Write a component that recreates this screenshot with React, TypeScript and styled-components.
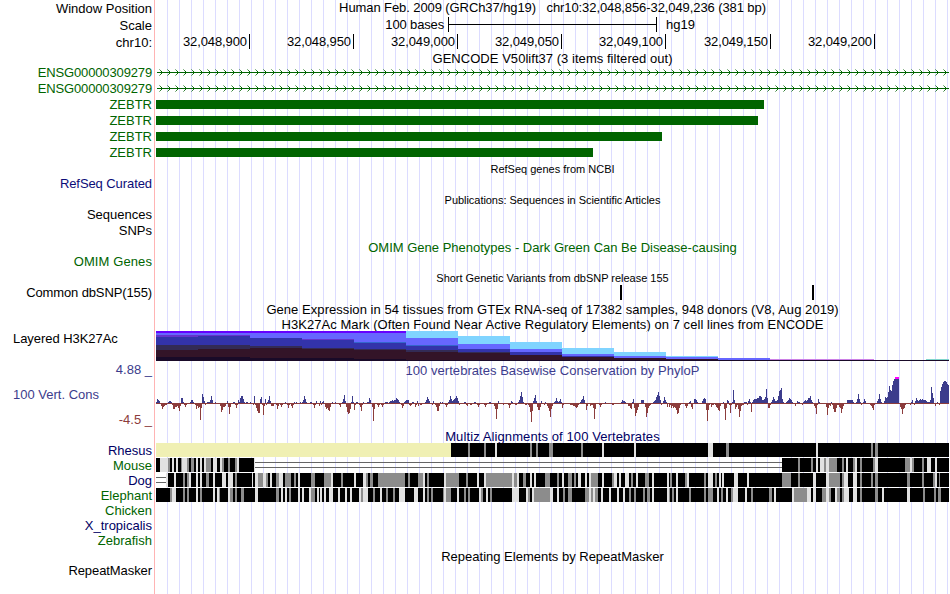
import * as React from "react";
import styled, { createGlobalStyle } from "styled-components";

const GlobalStyle = createGlobalStyle`
  body {
    margin: 0;
    background-color: #ffffff;
  }
`;

const BLACK = "#000000";
const GREEN = "#006400";
const NAVY = "#000064";
const CURATED = "#0c0c78";
const BLUE = "#3c3c8c";
const RED = "#8c3c3c";

const Browser = styled.div`
  display: flex;
  flex-direction: column;
  width: 949px;
  height: 594px;
  overflow: hidden;
  font-family: "Liberation Sans", Arial, sans-serif;
  font-size: 13px;
  line-height: 15px;
  white-space: pre;
`;

const Row = styled.div<{ $height: number }>`
  display: flex;
  flex: none;
  height: ${p => p.$height}px;
`;

const Label = styled.div<{ $color?: string; $top?: number; $left?: boolean; $spacing?: number }>`
  box-sizing: border-box;
  flex: none;
  width: 155px;
  padding: ${p => p.$top || 0}px 2px 0 13px;
  border-right: 1px solid #ffb4b4;
  color: ${p => p.$color || BLACK};
  letter-spacing: ${p => p.$spacing || 0}px;
  text-align: ${p => (p.$left ? "left" : "right")};
`;

const Plot = styled.div<{ $top?: number }>`
  box-sizing: border-box;
  flex: none;
  width: 793px;
  margin-left: 1px;
  padding-top: ${p => p.$top || 0}px;
  background-image: repeating-linear-gradient(
    to right,
    transparent 0,
    transparent 11px,
    #dcdcff 11px,
    #dcdcff 12px
  );
`;

const Caption = styled.div<{ $color?: string; $small?: boolean; $spacing?: number }>`
  color: ${p => p.$color || BLACK};
  font-size: ${p => (p.$small ? 11 : 13)}px;
  letter-spacing: ${p => p.$spacing || 0}px;
  text-align: center;
`;

const Scale = styled.div`
  display: flex;
`;

const ScaleName = styled.div`
  box-sizing: border-box;
  width: 292px;
  padding-right: 4px;
  letter-spacing: -0.15px;
  text-align: right;
`;

const ScaleBar = styled.div`
  display: flex;
  align-items: center;
  box-sizing: border-box;
  width: 209px;
  height: 15px;
  margin-right: 9px;
  border: solid #000000;
  border-width: 0 1px;
`;

const ScaleLine = styled.div`
  width: 100%;
  height: 1px;
  background-color: #000000;
`;

const Ruler = styled.div`
  display: flex;
`;

const RulerMark = styled.div<{ $width: number }>`
  box-sizing: border-box;
  flex: none;
  width: ${p => p.$width}px;
  padding-right: 2px;
  border-right: 1px solid #000000;
  letter-spacing: -0.1px;
  text-align: right;
`;

const Exon = styled.div<{ $width: number }>`
  width: ${p => p.$width}px;
  height: 9px;
  background-color: ${GREEN};
`;

const Variants = styled.div`
  display: flex;
`;

const Variant = styled.div<{ $gap: number }>`
  width: 2px;
  height: 15px;
  margin-left: ${p => p.$gap}px;
  background-color: #000000;
`;

const Limits = styled.div`
  display: flex;
  flex-direction: column;
`;

const Limit = styled.div<{ $color: string; $align: string; $gap?: number }>`
  margin-top: ${p => p.$gap || 0}px;
  color: ${p => p.$color};
  text-align: ${p => p.$align};
`;

const Drawing = styled.svg`
  display: block;
  shape-rendering: crispEdges;
`;

const marks = [
  { text: "32,048,900", width: 94 },
  { text: "32,048,950", width: 104 },
  { text: "32,049,000", width: 104 },
  { text: "32,049,050", width: 104 },
  { text: "32,049,100", width: 104 },
  { text: "32,049,150", width: 105 },
  { text: "32,049,200", width: 104 }
];

const exons = [608, 602, 506, 437];

const LIGHT = "#80d4ff";
const VIOLET = "#6600ff";
const PERI = "#6666ff";
const PURPLE = "#6633cc";
const INDIGO = "#3333aa";
const DUSK = "#332b55";
const MAROON = "#331428";
const NIGHT = "#190a28";
const AZURE = "#3366cc";

type Layer = [number, string];

// every layer is [top, color] and runs down to the base
const steps: { x: number; layers: Layer[] }[] = [
  { x: 0, layers: [[0, VIOLET], [2, PERI], [4, PURPLE], [6, INDIGO], [14, DUSK], [19, MAROON], [26, NIGHT]] },
  { x: 42, layers: [[0, VIOLET], [2, PERI], [4, PURPLE], [5, INDIGO], [14, DUSK], [18, MAROON], [26, NIGHT]] },
  { x: 94, layers: [[0, VIOLET], [2, PERI], [7, INDIGO], [15, DUSK], [17, MAROON], [27, NIGHT]] },
  { x: 146, layers: [[0, VIOLET], [2, PERI], [8, PURPLE], [9, INDIGO], [17, DUSK], [18, MAROON], [27, NIGHT]] },
  { x: 198, layers: [[0, VIOLET], [2, PERI], [11, AZURE], [12, INDIGO], [18, DUSK], [19, MAROON], [28, NIGHT]] },
  { x: 250, layers: [[0, LIGHT], [7, PERI], [14, AZURE], [15, INDIGO], [19, DUSK], [21, MAROON], [29, NIGHT]] },
  { x: 302, layers: [[5, LIGHT], [13, PERI], [18, INDIGO], [21, DUSK], [22, MAROON], [29, NIGHT]] },
  { x: 354, layers: [[11, LIGHT], [18, PERI], [21, INDIGO], [24, MAROON], [29, NIGHT]] },
  { x: 406, layers: [[17, LIGHT], [23, PERI], [25, INDIGO], [26, MAROON], [29, NIGHT]] },
  { x: 458, layers: [[21, LIGHT], [25, PERI], [27, MAROON], [29, NIGHT]] },
  { x: 510, layers: [[25, LIGHT], [26, PERI], [28, MAROON], [29, NIGHT]] },
  { x: 562, layers: [[27, PERI], [29, NIGHT]] },
  { x: 614, layers: [[28, "#cc80e6"], [29, NIGHT]] },
  { x: 718, layers: [[29, NIGHT]] },
  { x: 770, layers: [[28, "#80d4cc"], [29, NIGHT]] }
];

// first column of a run, then one height per column
const scores: number[][] = [
  [156, 1, 4, 3, 2, 0, -3, -6, -4, -3, -2, -2, -1, 1, 2, 2, 1, -2, -6, -6, -4, -4, -3, -5, -8, -3, 5, 5, 1, -2, -4, -2, -1, -1, -1, 1, 3, 3, 1, -1, -2, -6, -3],
  [198, -5, -4, -17, -5, 9, 6, 2, -2, -1, 1, 1, 1, 3, 7, 3, -1, -1, 1, -1, -1, -1, -1, -3, -9, -7, -4, -4, -3, -1, 2, -4, -11, -4, -1, -1, 1, 1, -2, -5, -2, 3, 1],
  [240, 5, 7, 7, 4, 1, -1, 1, 1, -1, -1, 1, -1, -1, -2, 7, -2, -5, -8, -10, -10, 4, 6, -2, -12, -3, 4, -2, 1, 3, 7, 2, -3, -3, -3, 0, -1, -2, -6, -3, -1, -2, -4, -2],
  [283, -1, -1, 1, -1, -2, -5, -2, -1, -3, -5, -2, 1, -1, 1, -1, -1, 0, 1, 0, 1, 3, 7, 4, 1, -1, -1, 0, 1, 1, -1, -2, -5, -2, 2, -1, -1, -3, 2, -2, 1, 2, -1],
  [325, -4, -6, -5, -7, -8, -4, -1, 1, -1, -1, 1, -1, -1, -1, -2, -4, -1, 1, 4, 8, 2, -4, -9, -11, -10, -6, 1, 7, 1, -7, -2, 1, 1, -1, -2, -4, -8, -2, 1, -1, -1, -1, 1, 1, 5],
  [370, 3, -1, -4, -18, -6, -1, -1, -2, -4, -2, -1, -2, -4, -2, -1, 1, 1, 1, -1, 1, 2, 2, 3, 2, 3, 3, 5, 4, 3, 1, -1, -2, -5, -3, 1, 2, 3, 3, 3, -2],
  [410, -3, -2, 1, 1, -1, -4, -2, 2, -3, -1, -2, -2, -1, -1, -1, 1, 3, 6, 4, 2, -1, -1, -2, 2, -1, -2, -4, -8, -8, -3, 1, -1, 1, -1, -1, -2, -4, -2, 1, 3, 7, 4, 2],
  [453, 3, 4, 5, 7, 5, 2, -2, -1, -1, -1, -1, 1, 1, -2, -3, -1, -1, -2, -2, -1, -1, 1, 1, -1, -2, -4, -2, 0, -1, -1, -1, -2, -4, -2, -1, -1, 1, 1, -1, -1, -1, -3, -6, -16, -6, 2, -1],
  [500, 0, -1, -1, -2, -1, -1, 0, -1, -2, -5, -2, 2, 1, 0, -1, -2, -2, -1, 1, 3, 7, 11, 6, 1, -1, -2, -2, -1, -2, -4, -9, -19, -8, 2, 5, 8, 2, -4, -7, -7, -4, 2, -1],
  [543, -1, -2, 1, -1, -3, -5, -8, -14, -6, -3, -1, 1, 2, 5, 2, 1, 2, 4, 1, -5, -2, -1, -1, -1, -1, -1, -1, -2, -2, -2, -3, -3, -4, -5, -4, -2, -1, 1, 3, 4, 7, 3, -1],
  [586, -7, -3, -1, -1, -3, -2, -2, -5, -16, -6, -1, 0, -1, -2, -4, -2, -1, 0, 0, 1, 0, -1, -1, 0, -1, -1, -2, -2, -1, 0, -1, -1, -1, -1, 0, 1, 3, 2, 2, 1, -1],
  [627, -1, -3, -3, -5, -6, 1, 4, -5, -13, -10, -7, -4, -1, -1, 3, 3, 3, -1, -4, -14, -10, -5, -3, -2, -1, -1, 1, 2, 3, 6, 8, 11, 7, 3, -2, -1, 2, 6, 3, 1, -4, -1],
  [669, -4, -2, -5, -3, -5, -4, -5, -7, -11, -10, -5, -2, -1, -1, 0, -1, -3, -5, -3, -1, 1, 2, -4, -6, -1, 4, 4, 3, 1, -1, -1, -1, -1, 2, 4, 5, 4, -7, -18, -7],
  [709, -2, -1, -4, -2, -2, -1, -2, -4, -5, -7, -8, -3, -1, -1, 1, -6, -17, -5, 3, 2, -2, -10, -2, 1, 13, 3, -6, -4, -2, -6, -14, -8, -3, -2, -2, 1, 1, 1, -2, 2, 4, 1, -9, 1],
  [753, 3, 4, 4, 4, 5, 5, 7, 7, 6, 3, 3, 4, 6, 14, 5, -5, -5, -2, 1, 3, 6, 4, 2, 2, 3, 7, 12, 13, 15, 4, 1, -1, -1, 1, 2, 3, 5, 4, 3, 1, -1, -1, -3, -1, 2, 1, 1, -1, -1],
  [802, -2, 1, 2, 3, 2, 3, 5, 5, 7, 3, 1, -1, -3, -5, -11, -2, 4, 1, -1, -1, -1, -1, -1, -1, -4, -12, -5, -2, -3, 1, -2, -6, -9, -9, -5, -2, -2, -4, -5, -10, -6, -3, -1, -1, -1],
  [847, 3, 3, 3, 3, 3, 3, 1, -1, -1, 1, 4, 9, 4, 1, -2, -1, 1, 4, 2, -1, -1, -1, -1, -2, -3, -5, -7, -2, -1, -1, 2, 4, 9, 4, 1, -1, -1, 2, 6, 5, 6, 11, 17, 13, 12, 18, 22, 24, 25, 25, 25, 25],
  [899, 0, -4, -6, -11, -6, -5, -2, -1, -1, -1, -1, -2, 1, 3, 0, -2, 2, 5, 3, 2, 3, 4, 3, 4, 3, 3, 3, 2, 1, 1, 1, 3, 16, 10, 5, -1, -3, -1, 1, -1, -2, 12, 16, 19, 21, 22, 22, 21, 19, 18]
];

// k black, g gray, l light, y missing, w gap; the number is the run length
const alignments = [
  {
    name: "Rhesus",
    color: NAVY,
    runs:
      "y295 k17 g2 k14 g2 k9 l2 k33 g2 k4 g2 k11 g4 k28 g2 k19 l2 k30 l2 k72 l5 k13 g3 k87 l2 k53 g2 k2 g3 k71"
  },
  {
    name: "Mouse",
    color: GREEN,
    runs:
      "k4 l8 g2 k2 l2 k2 l2 k3 g1 l5 g2 k2 g3 k2 l2 k2 l2 k2 l2 g5 k2 l4 k3 l2 g2 k4 g2 k5 g2 l2 k15 l1 w527 " +
      "k16 g2 k11 g2 k3 l2 k2 l4 g2 l3 g8 k5 g2 k2 l2 k5 g2 l2 k3 g2 k11 g2 l3 k27 g5 l2 g2 k8 g2 k3 l4 k4 l2 k12"
  },
  {
    name: "Dog",
    color: NAVY,
    runs:
      "w10 l2 k6 l2 k7 g2 k2 g2 l2 k5 l2 k2 l2 k4 g3 k4 l2 k7 l4 k2 l5 k2 g2 k15 l1 k2 l3 g5 l3 g2 k2 l2 k4 g3 l4 k2 g6 k3 g2 k2 l2 k11 g4 k9 g7 l2 k8 g2 k7 " +
      "k4 l2 k7 l3 g2 k2 g3 k5 g27 k3 g2 k8 g5 l2 k2 g2 k15 l2 g13 k7 g2 k9 l2 k5 l2 g26 l2 g3 l2 k4 g3 k4 l2 k2 l2 k9 g5 " +
      "k7 g2 k3 l2 k4 g4 k2 g2 k2 l3 k4 l2 k2 l2 g7 k4 l2 k8 g2 l3 k2 l2 k4 l4 k2 g2 k3 l2 k7 g4 k3 l2 k13 l2 k1 g2 k4 l2 k7 g2 l2 k15 g2 k2 l5 k2 g2 k2 l2 k1 l2 k10 l4 k9 l2 k1 " +
      "k32 g9 k7 g2 k13 l3 k10 l3 g11 k2 g2 l4 k5 l4 k3 g2 k9 g2 k2 g3 k29 g3 k12 g2 k9 g2 l2 k2 g1 k9"
  },
  {
    name: "Elephant",
    color: GREEN,
    runs:
      "k14 g2 l4 k7 g2 k2 g2 k7 l2 k2 g2 k11 l2 k2 l2 g1 k8 l2 g3 k2 g2 k4 g3 k11 l3 k18 g3 k2 l2 k2 l2 k2 g2 k7 l2 k2 l2 k5 l2 g4 k2 l2 k1 l2 k2 l2 k3 l4 k5 l2 k5 l2 k3 " +
      "l2 k7 l2 g2 l5 k5 g2 k5 l2 k4 g2 k5 g2 k4 l6 k9 l4 k5 l2 k2 g2 k2 g2 k10 g1 l2 g5 k6 l2 k5 g2 k2 g2 k9 l2 g2 k3 l2 k2 g2 k20 l7 k7 l2 g2 k2 l2 g16 " +
      "l3 k4 l2 k4 g2 k3 g4 k13 g4 l2 g2 l2 g3 k3 l2 k6 l2 k6 l2 k4 l2 k4 g2 k3 g2 k7 g2 k2 g3 k2 l2 k13 l2 g1 k2 g2 k2 l2 k11 g2 k13 g2 k2 g5 k4 l2 k2 g2 k3 l2 k3 g2 l5 k7 l2 k3 " +
      "k1 g2 k16 g3 k2 l2 k16 l2 g13 l4 k2 l3 k6 g4 l3 g2 k4 l2 g3 k2 g2 l5 k4 l4 k3 g2 k13 g3 k4 l2 k23 l3 k13 g2 k9 g2 k2 g3 k9"
  },
  { name: "Chicken", color: GREEN, runs: "" },
  { name: "X_tropicalis", color: NAVY, runs: "" },
  { name: "Zebrafish", color: GREEN, runs: "" }
];

const shades: { [key: string]: string } = {
  k: "#000000",
  g: "#8c8c8c",
  l: "#e1e1e1",
  y: "#f0f0b4"
};

const Intron = () => {
  const arrows = [];
  for (let tip = 6; tip < 793; tip += 8) {
    arrows.push(
      <g key={tip}>
        <path d={`M${tip - 1} 6h1v1h-1z M${tip - 1} 8h1v1h-1z M${tip} 7h1v1h-1z`} />
        <path d={`M${tip - 2} 5h1v1h-1z M${tip - 2} 9h1v1h-1z`} opacity={0.8} />
        <path d={`M${tip - 3} 4h1v1h-1z M${tip - 3} 10h1v1h-1z`} opacity={0.45} />
      </g>
    );
  }
  return (
    <Drawing width={793} height={16} fill={GREEN}>
      <rect x={1} y={7} width={792} height={1} />
      {arrows}
    </Drawing>
  );
};

const Acetylation = () => (
  <Drawing width={793} height={30}>
    {steps.map((step, i) => {
      const end = i + 1 < steps.length ? steps[i + 1].x : 793;
      return step.layers.map(([top, color]) => (
        <rect key={`${step.x}-${top}`} x={step.x} y={top} width={end - step.x} height={30 - top} fill={color} />
      ));
    })}
  </Drawing>
);

const Conservation = () => (
  <Drawing width={793} height={53}>
    <rect y={27} width={793} height={1} fill={RED} />
    {scores.map(([start, ...heights]) => (
      <g key={start}>
        {heights.map((h, i) => (
          <rect
            key={i}
            x={start + i - 156}
            y={h > 0 ? 27 - h : 27}
            width={1}
            height={h > 0 ? h : -h}
            fill={h > 0 ? BLUE : RED}
          />
        ))}
      </g>
    ))}
    <rect x={739} y={1} width={4} height={2} fill="#ff00ff" />
  </Drawing>
);

const Alignment = ({ runs }: { runs: string }) => {
  let x = 0;
  return (
    <Drawing width={793} height={14}>
      {runs.split(" ").map((run, i) => {
        const width = Number(run.slice(1));
        const left = x;
        x += width;
        if (run[0] === "w") {
          return <path key={i} d={`M${left} 4h${width}v1h-${width}z M${left} 9h${width}v1h-${width}z`} fill="#646464" />;
        }
        return <rect key={i} x={left} width={width} height={14} fill={shades[run[0]]} />;
      })}
    </Drawing>
  );
};

interface TrackProps {
  height: number;
  label?: string;
  color?: string;
  top?: number;
  plotTop?: number;
  left?: boolean;
  spacing?: number;
  children?: React.ReactNode;
}

const Track = ({ height, label, color, top, plotTop, left, spacing, children }: TrackProps) => (
  <Row $height={height}>
    <Label $color={color} $top={top} $left={left} $spacing={spacing}>{label}</Label>
    <Plot $top={plotTop}>{children}</Plot>
  </Row>
);

const App = () => (
  <Browser>
    <GlobalStyle />
    <Track height={17} label="Window Position" top={1}>
      <Caption $spacing={-0.09}>
        {"Human Feb. 2009 (GRCh37/hg19)   chr10:32,048,856-32,049,236 (381 bp)"}
      </Caption>
    </Track>
    <Track height={17} label="Scale" top={1}>
      <Scale>
        <ScaleName>100 bases</ScaleName>
        <ScaleBar>
          <ScaleLine />
        </ScaleBar>
        <div>hg19</div>
      </Scale>
    </Track>
    <Track height={17} label="chr10:" top={1}>
      <Ruler>
        {marks.map(mark => (
          <RulerMark key={mark.text} $width={mark.width}>{mark.text}</RulerMark>
        ))}
      </Ruler>
    </Track>
    <Track height={14}>
      <Caption $spacing={0.04}>GENCODE V50lift37 (3 items filtered out)</Caption>
    </Track>
    <Track height={16} label="ENSG00000309279" color={GREEN} spacing={-0.14}>
      <Intron />
    </Track>
    <Track height={16} label="ENSG00000309279" color={GREEN} spacing={-0.14}>
      <Intron />
    </Track>
    {exons.map(width => (
      <Track key={width} height={16} label="ZEBTR" color={GREEN} plotTop={3}>
        <Exon $width={width} />
      </Track>
    ))}
    <Track height={15} plotTop={1}>
      <Caption $small>RefSeq genes from NCBI</Caption>
    </Track>
    <Track height={16} label="RefSeq Curated" color={CURATED} spacing={-0.08} />
    <Track height={15} plotTop={1}>
      <Caption $small $spacing={-0.04}>Publications: Sequences in Scientific Articles</Caption>
    </Track>
    <Track height={16} label="Sequences" />
    <Track height={16} label="SNPs" />
    <Track height={15} plotTop={1}>
      <Caption $color={GREEN}>OMIM Gene Phenotypes - Dark Green Can Be Disease-causing</Caption>
    </Track>
    <Track height={16} label="OMIM Genes" color={GREEN} spacing={0.1} />
    <Track height={15} plotTop={1}>
      <Caption $small $spacing={-0.02}>Short Genetic Variants from dbSNP release 155</Caption>
    </Track>
    <Track height={16} label="Common dbSNP(155)" spacing={-0.12}>
      <Variants>
        <Variant $gap={464} />
        <Variant $gap={190} />
      </Variants>
    </Track>
    <Track height={16} plotTop={1}>
      <Caption $spacing={0.055}>
        Gene Expression in 54 tissues from GTEx RNA-seq of 17382 samples, 948 donors (V8, Aug 2019)
      </Caption>
    </Track>
    <Track height={14}>
      <Caption $spacing={0.05}>
        H3K27Ac Mark (Often Found Near Active Regulatory Elements) on 7 cell lines from ENCODE
      </Caption>
    </Track>
    <Track height={30} label="Layered H3K27Ac" left spacing={-0.05}>
      <Acetylation />
    </Track>
    <Row $height={68}>
      <Label $top={1}>
        <Limits>
          <Limit $color={BLUE} $align="right">4.88 _</Limit>
          <Limit $color={BLUE} $align="left" $gap={10}>100 Vert. Cons</Limit>
          <Limit $color={RED} $align="right" $gap={10}>-4.5 _</Limit>
        </Limits>
      </Label>
      <Plot $top={2}>
        <Caption $color={BLUE} $spacing={0.04}>100 vertebrates Basewise Conservation by PhyloP</Caption>
        <ScorePlot />
      </Plot>
    </Row>
    <Track height={14}>
      <Caption $color={NAVY} $spacing={0.1}>Multiz Alignments of 100 Vertebrates</Caption>
    </Track>
    {alignments.map(({ name, color, runs }) => (
      <Track key={name} height={15} label={name} color={color}>
        {runs && <Alignment runs={runs} />}
      </Track>
    ))}
    <Track height={15} plotTop={1}>
      <Caption>Repeating Elements by RepeatMasker</Caption>
    </Track>
    <Track height={31} label="RepeatMasker" spacing={-0.08} />
  </Browser>
);

const ScoreArea = styled.div`
  margin-top: -2px;
`;

const ScorePlot = () => (
  <ScoreArea>
    <Conservation />
  </ScoreArea>
);

export default App;
